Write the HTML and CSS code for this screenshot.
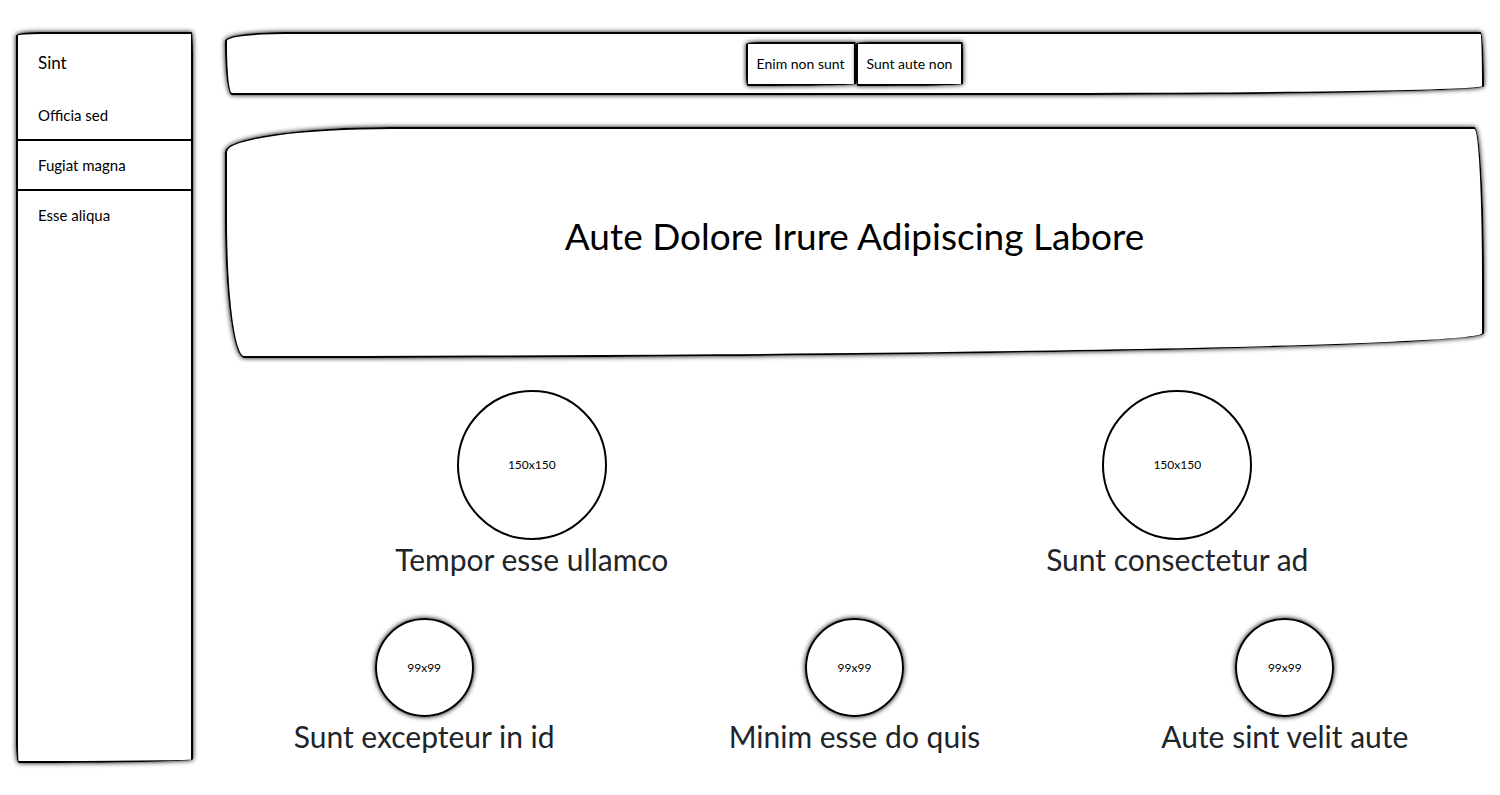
FILE: index.html
```
<!DOCTYPE html>
<html lang="en">
<head>
<meta charset="utf-8">
<meta name="viewport" content="width=device-width, initial-scale=1">
<title>Aute Dolore Irure Adipiscing Labore</title>
<link rel="stylesheet" href="styles.css">
</head>
<body>
<div class="page">
  <aside class="sidebar sketch">
    <h2 class="sidebar-title">Sint</h2>
    <nav class="menu" aria-label="Sidebar">
      <a class="menu-link" href="#">Officia sed</a>
      <a class="menu-link" href="#">Fugiat magna</a>
      <a class="menu-link" href="#">Esse aliqua</a>
    </nav>
  </aside>
  <main class="content">
    <div class="toolbar sketch">
      <button class="button sketch" type="button">Enim non sunt</button>
      <button class="button sketch" type="button">Sunt aute non</button>
    </div>
    <header class="hero sketch">
      <h1 class="hero-title">Aute Dolore Irure Adipiscing Labore</h1>
    </header>
    <section class="row">
      <article class="item">
        <div class="circle circle-large">150x150</div>
        <h3 class="item-title">Tempor esse ullamco</h3>
      </article>
      <article class="item">
        <div class="circle circle-large">150x150</div>
        <h3 class="item-title">Sunt consectetur ad</h3>
      </article>
    </section>
    <section class="row">
      <article class="item">
        <div class="circle circle-small">99x99</div>
        <h3 class="item-title">Sunt excepteur in id</h3>
      </article>
      <article class="item">
        <div class="circle circle-small">99x99</div>
        <h3 class="item-title">Minim esse do quis</h3>
      </article>
      <article class="item">
        <div class="circle circle-small">99x99</div>
        <h3 class="item-title">Aute sint velit aute</h3>
      </article>
    </section>
  </main>
</div>
</body>
</html>
```
FILE: styles.css
```
* {
  box-sizing: border-box;
}

body {
  margin: 0;
  background: #fff;
  color: #000;
  font-family: Lato, "Open Sans", sans-serif;
  font-size: 14px;
  line-height: 24px;
}

h1,
h2,
h3 {
  margin: 0;
  font-weight: 400;
}

.page {
  display: grid;
  grid-template-columns: 209px 1fr;
  padding: 32px 0;
}

/* Hand-drawn outline with uneven corners */
.sketch {
  border: 2px solid #000;
  border-radius: 175px 10px 1300px 20px / 26px 160px 26px 145px;
  box-shadow: 0 0 5px #000;
}

.sidebar {
  margin: 0 16px;
}

.sidebar-title {
  padding: 16px 20px;
  font-size: 17px;
  line-height: 25px;
}

.menu {
  display: flex;
  flex-direction: column;
}

.menu-link {
  padding: 12px 20px;
  color: #000;
  font-size: 15px;
  text-decoration: none;
}

.menu-link + .menu-link {
  border-top: 2px solid #000;
}

.content {
  display: flex;
  flex-direction: column;
  gap: 32px;
}

.toolbar {
  display: flex;
  justify-content: center;
  margin: 0 16px;
  padding: 8px 8px 7px;
}

.button {
  padding: 8px 9px;
  background: #fff;
  color: #000;
  font: inherit;
  cursor: pointer;
}

.hero {
  margin: 0 16px;
  padding: 78px 16px 91px;
  text-align: center;
}

.hero-title {
  font-size: 37px;
  line-height: 58px;
}

.row {
  display: flex;
}

.item {
  display: flex;
  flex: 1;
  flex-direction: column;
  align-items: center;
  padding-bottom: 8px;
}

.circle {
  display: flex;
  align-items: center;
  justify-content: center;
  border: 2px solid #000;
  border-radius: 50%;
  font-size: 12px;
}

.circle-large {
  width: 150px;
  height: 150px;
}

.circle-small {
  width: 99px;
  height: 99px;
  box-shadow: 0 0 5px #000;
}

.item-title {
  color: #212529;
  font-size: 30px;
  line-height: 38px;
}
```
